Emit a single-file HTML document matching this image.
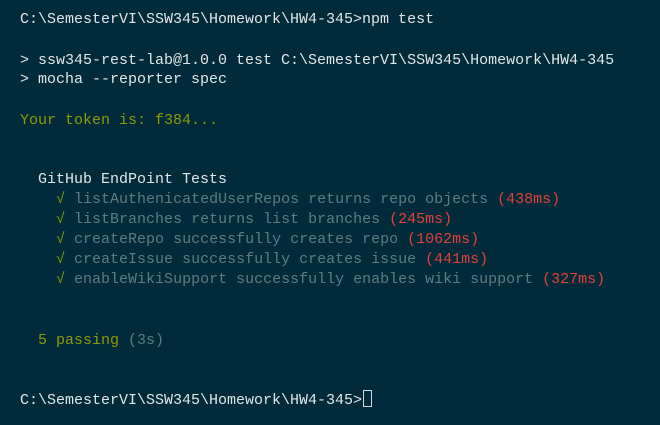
<!DOCTYPE html>
<html><head><meta charset="utf-8"><style>
html,body{margin:0;padding:0;}
body{width:660px;height:425px;background:#012b3a;overflow:hidden;position:relative;font-family:"Liberation Mono",monospace;font-size:15px;color:#dfe6e8;}
.l{position:absolute;left:20px;height:20px;line-height:21px;white-space:pre;}
.g{color:#8a9a0a}
.t{color:#5f7b82}
.r{color:#e0413a}
.cur{display:inline-block;width:7px;height:15px;border:1px solid #cfd9dc;vertical-align:-3px;margin-left:1px;}
</style></head><body>
<div class="l" style="top:9px">C:\SemesterVI\SSW345\Homework\HW4-345&gt;npm test</div>
<div class="l" style="top:50px">&gt; ssw345-rest-lab@1.0.0 test C:\SemesterVI\SSW345\Homework\HW4-345</div>
<div class="l" style="top:69px">&gt; mocha --reporter spec</div>
<div class="l g" style="top:110px">Your token is: f384...</div>
<div class="l" style="top:169px">  GitHub EndPoint Tests</div>
<div class="l" style="top:189px">    <span class="g">√</span> <span class="t">listAuthenicatedUserRepos returns repo objects</span> <span class="r">(438ms)</span></div>
<div class="l" style="top:209px">    <span class="g">√</span> <span class="t">listBranches returns list branches</span> <span class="r">(245ms)</span></div>
<div class="l" style="top:229px">    <span class="g">√</span> <span class="t">createRepo successfully creates repo</span> <span class="r">(1062ms)</span></div>
<div class="l" style="top:249px">    <span class="g">√</span> <span class="t">createIssue successfully creates issue</span> <span class="r">(441ms)</span></div>
<div class="l" style="top:269px">    <span class="g">√</span> <span class="t">enableWikiSupport successfully enables wiki support</span> <span class="r">(327ms)</span></div>
<div class="l" style="top:330px">  <span class="g">5 passing</span> <span class="t">(3s)</span></div>
<div class="l" style="top:390px">C:\SemesterVI\SSW345\Homework\HW4-345&gt;<span class="cur"></span></div>
</body></html>
